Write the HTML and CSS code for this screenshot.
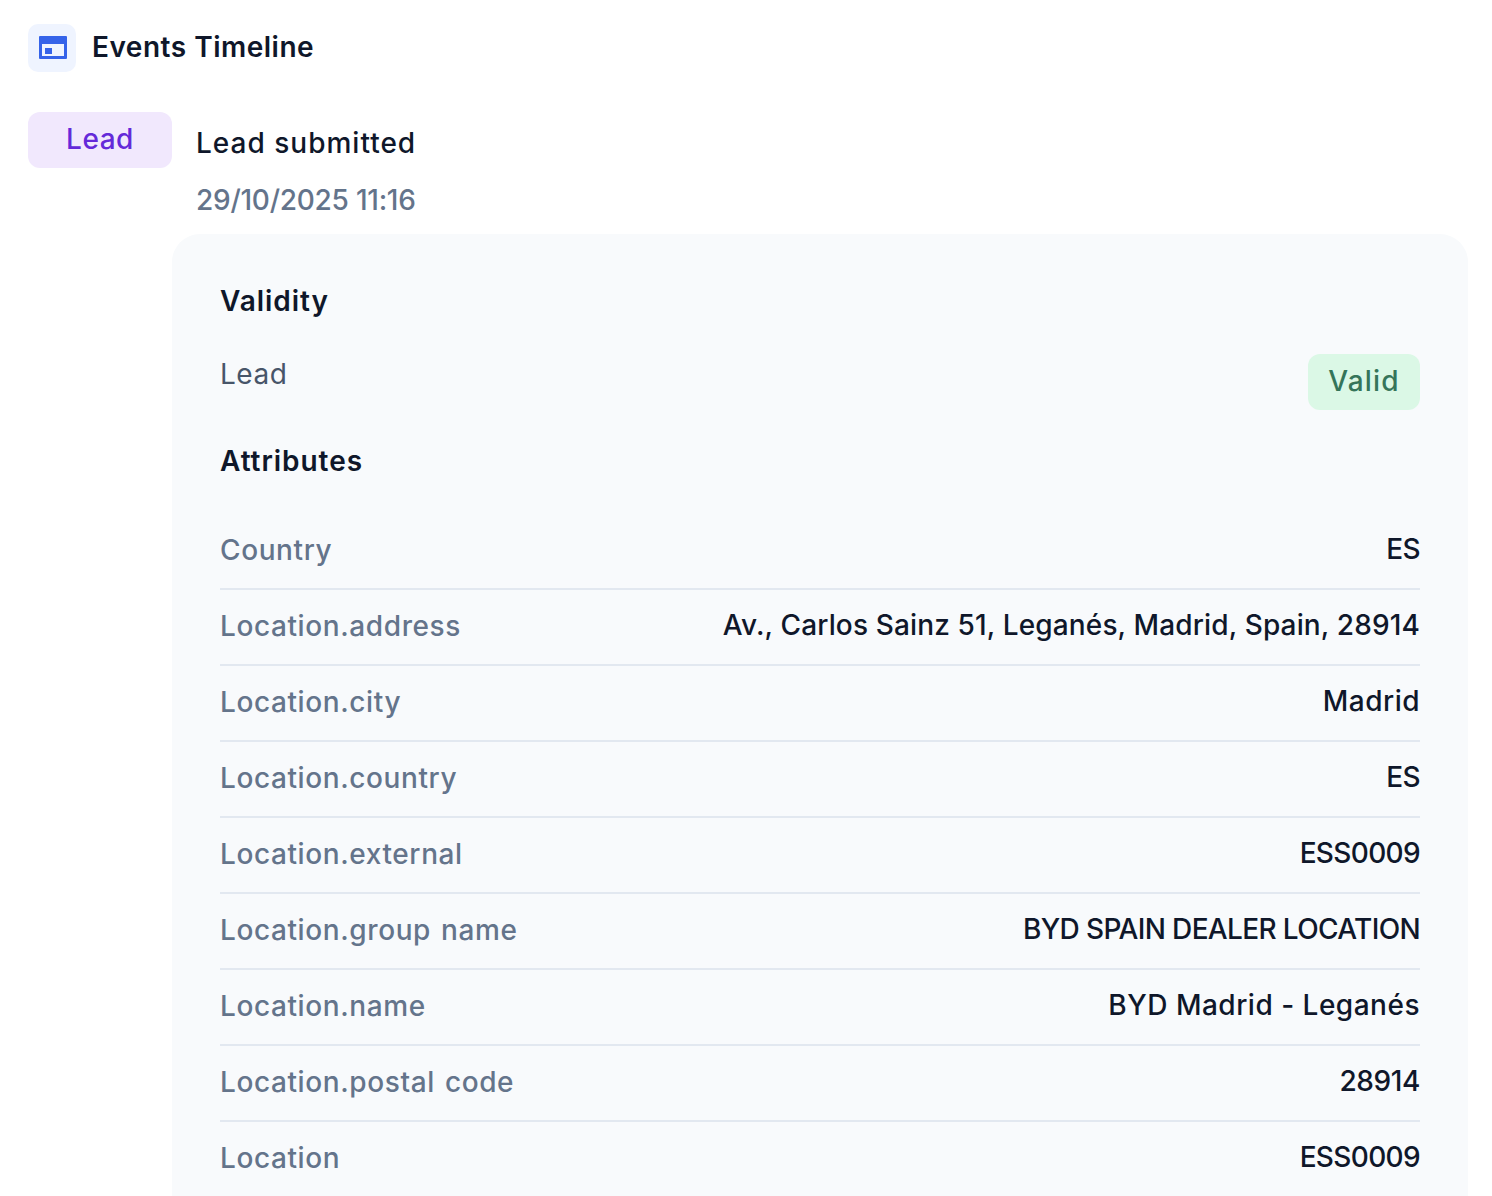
FILE: index.html
```html
<!DOCTYPE html>
<html lang="en">
<head>
<meta charset="utf-8">
<title>Events Timeline</title>
<link rel="stylesheet" href="styles.css">
</head>
<body>
<header class="header">
  <div class="header-icon">
    <svg width="32" height="32" viewBox="0 0 32 32" aria-hidden="true">
      <path class="ic" fill-rule="evenodd" d="M4 4h26a1 1 0 0 1 1 1v21a1 1 0 0 1-1 1H4a1 1 0 0 1-1-1V5a1 1 0 0 1 1-1zM6 12v12h22V12zM9 16h7v6H9z"/>
    </svg>
  </div>
  <h1 class="title">Events Timeline</h1>
</header>
<section class="event">
  <div class="event-head">
    <span class="chip chip-lead">Lead</span>
    <div class="event-meta">
      <div class="event-name">Lead submitted</div>
      <div class="event-date">29/10/2025 11:16</div>
    </div>
  </div>
  <div class="card">
    <h2 class="section-title validity">Validity</h2>
    <div class="validity-row">
      <span class="validity-label">Lead</span>
      <span class="chip chip-valid">Valid</span>
    </div>
    <h2 class="section-title attributes">Attributes</h2>
    <div class="attrs">
      <div class="attr"><span class="k">Country</span><span class="v v-caps">ES</span></div>
      <div class="attr"><span class="k">Location.address</span><span class="v v-long">Av., Carlos Sainz 51, Leganés, Madrid, Spain, 28914</span></div>
      <div class="attr"><span class="k">Location.city</span><span class="v v-name">Madrid</span></div>
      <div class="attr"><span class="k">Location.country</span><span class="v v-caps">ES</span></div>
      <div class="attr"><span class="k">Location.external</span><span class="v v-caps">ESS0009</span></div>
      <div class="attr"><span class="k">Location.group name</span><span class="v v-caps">BYD SPAIN DEALER LOCATION</span></div>
      <div class="attr"><span class="k">Location.name</span><span class="v v-name">BYD Madrid - Leganés</span></div>
      <div class="attr"><span class="k">Location.postal code</span><span class="v v-num">28914</span></div>
      <div class="attr"><span class="k">Location</span><span class="v v-caps">ESS0009</span></div>
    </div>
  </div>
</section>
</body>
</html>
```

FILE: styles.css
```css
* { box-sizing: border-box; }
html, body { margin: 0; height: 100%; overflow: hidden; background: #fff; }
body {
  padding: 24px 24px 0 28px;
  font-family: Inter, "Noto Sans", sans-serif;
  color: #0f172a;
  font-size: 28px;
}
.header { display: flex; align-items: center; gap: 16px; height: 48px; }
.header-icon {
  width: 48px; height: 48px; border-radius: 10px; background: #eff4ff;
  display: flex; align-items: center; justify-content: center;
}
.ic { fill: #3563e9; }
.title { margin: 0; padding-bottom: 2px; font-size: 28px; font-weight: 600; line-height: 46px; letter-spacing: 0.5px; }
.event { margin-top: 40px; }
.event-head { display: flex; gap: 24px; align-items: flex-start; }
.chip {
  display: flex; align-items: center; justify-content: center;
  height: 56px; border-radius: 12px; font-weight: 500; font-size: 28px;
  padding-bottom: 2px;
}
.chip-lead { width: 144px; background: #f1e8fd; color: #6429d9; letter-spacing: 0.5px; }
.chip-valid { width: 112px; background: #dbf8e6; color: #35755a; letter-spacing: 1.2px; }
.event-meta { padding-top: 11px; }
.event-name { font-weight: 500; line-height: 40px; letter-spacing: 1px; }
.event-date { color: #64748b; font-weight: 500; line-height: 40px; margin-top: 17px; letter-spacing: -0.25px; }
.card {
  margin-left: 144px; margin-top: 14px; height: 1100px;
  padding: 48px; background: #f8fafc; border-radius: 28px 28px 0 0;
}
.section-title { margin: 0; font-size: 28px; font-weight: 600; line-height: 40px; letter-spacing: 0.95px; }
.validity { margin-top: -1px; }
.validity-row { display: flex; justify-content: space-between; align-items: flex-start; margin-top: 33px; }
.validity-label { color: #475569; line-height: 40px; letter-spacing: 0.5px; }
.attributes { margin-top: 31px; }
.attrs { margin-top: 33px; }
.attr {
  height: 76px; padding-bottom: 2px; border-bottom: 2px solid #e2e8f0;
  display: flex; justify-content: space-between; align-items: center;
}
.k { color: #64748b; font-weight: 500; letter-spacing: 0.6px; word-spacing: 2px; }
.v { font-weight: 500; margin-bottom: 2px; }
.v-caps { letter-spacing: -0.65px; }
.v-long { letter-spacing: 0.14px; }
.v-name { letter-spacing: 0.5px; }
.v-num { letter-spacing: -0.4px; }
```
